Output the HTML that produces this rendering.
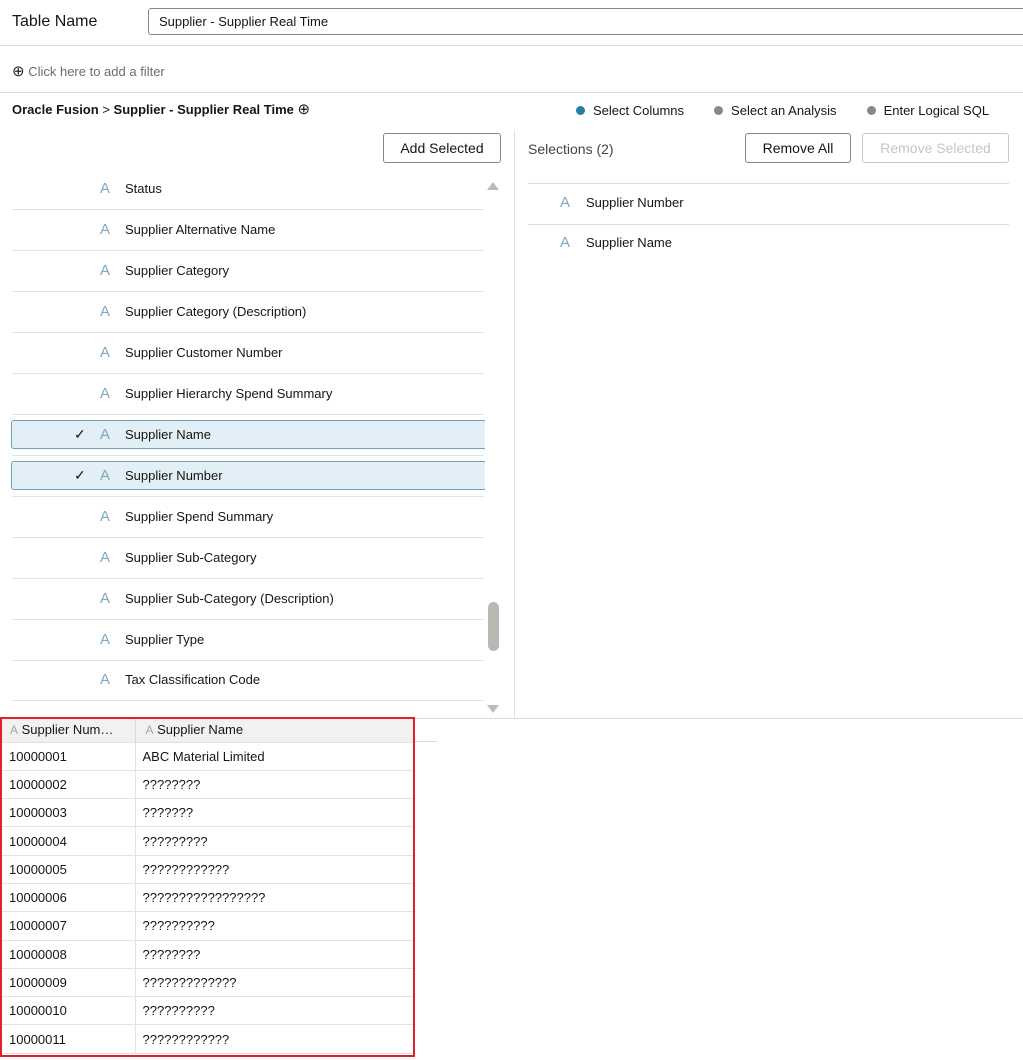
<!DOCTYPE html>
<html><head><meta charset="utf-8"><style>
*{box-sizing:border-box;margin:0;padding:0}
body{width:1023px;height:1060px;background:#fff;font-family:"Liberation Sans",sans-serif;color:#161513;position:relative;overflow:hidden;font-size:13px}
.a{position:absolute}
.btn{position:absolute;border:1px solid #8a8886;border-radius:3px;background:#fff;font-size:14px;text-align:center;line-height:28px;height:30px}
.row{position:absolute;left:12px;width:472px;height:41px;border-bottom:1px solid #e4e2e0}
.row .ic{position:absolute;left:88px;top:11px;color:#7fa7bd;font-size:15px}
.row .t{position:absolute;left:113px;top:12px}
.sel{position:absolute;left:11px;width:474px;height:29px;background:#e2eff6;border:1px solid #6fa3b8;border-right:none;border-radius:3px 0 0 3px}
.sel .ck{position:absolute;left:62px;top:5px;font-size:14px}
.sel .ic{position:absolute;left:88px;top:5px;color:#7fa7bd;font-size:15px}
.sel .t{position:absolute;left:113px;top:6px}
.dot{display:inline-block;width:9px;height:9px;border-radius:50%;margin-right:8px;vertical-align:0}
table{border-collapse:collapse;font-size:13px;line-height:15px}
td{height:28.3px;border-bottom:1px solid #e4e2e0;padding:0 0 0 7px}
</style></head><body>
<div class="a" style="left:12px;top:13px;font-size:16px">Table Name</div>
<div class="a" style="left:148px;top:8px;width:890px;height:27px;border:1px solid #8a8886;border-radius:3px;padding:5px 10px;font-size:13px">Supplier - Supplier Real Time</div>
<div class="a" style="left:0;top:45px;width:1023px;border-top:1px solid #dcdad8"></div>
<div class="a" style="left:12px;top:62px;font-size:13px;color:#6f6d6b"><span style="color:#222;font-size:15px">⊕</span> Click here to add a filter</div>
<div class="a" style="left:0;top:92px;width:1023px;border-top:1px solid #dcdad8"></div>
<div class="a" style="left:12px;top:100px;font-weight:bold;font-size:13px">Oracle Fusion <span style="font-weight:normal">&gt;</span> Supplier - Supplier Real Time <span style="font-weight:normal;font-size:15px">⊕</span></div>
<div class="a" style="left:576px;top:103px;font-size:13px"><span class="dot" style="background:#227fa7"></span>Select Columns<span style="display:inline-block;width:30px"></span><span class="dot" style="background:#8a8886"></span>Select an Analysis<span style="display:inline-block;width:30px"></span><span class="dot" style="background:#8a8886"></span>Enter Logical SQL</div>
<div class="btn" style="left:383px;top:133px;width:118px">Add Selected</div>
<div class="a" style="left:514px;top:130px;height:588px;border-left:1px solid #e4e2e0"></div>
<div class="a" style="left:528px;top:141px;font-size:14px;color:#444">Selections (2)</div>
<div class="btn" style="left:745px;top:133px;width:106px">Remove All</div>
<div class="btn" style="left:862px;top:133px;width:147px;color:#c8c6c4;border-color:#c8c6c4">Remove Selected</div>
<div class="a" style="left:528px;top:183px;width:481px;border-top:1px solid #dcdad8"></div>
<div class="a" style="left:560px;top:194px;color:#7fa7bd;font-size:15px">A</div><div class="a" style="left:586px;top:195px">Supplier Number</div>
<div class="a" style="left:528px;top:224px;width:481px;border-top:1px solid #dcdad8"></div>
<div class="a" style="left:560px;top:234px;color:#7fa7bd;font-size:15px">A</div><div class="a" style="left:586px;top:235px">Supplier Name</div>

<div class="row" style="top:169px"><span class="ic">A</span><span class="t">Status</span></div>
<div class="row" style="top:210px"><span class="ic">A</span><span class="t">Supplier Alternative Name</span></div>
<div class="row" style="top:251px"><span class="ic">A</span><span class="t">Supplier Category</span></div>
<div class="row" style="top:292px"><span class="ic">A</span><span class="t">Supplier Category (Description)</span></div>
<div class="row" style="top:333px"><span class="ic">A</span><span class="t">Supplier Customer Number</span></div>
<div class="row" style="top:374px"><span class="ic">A</span><span class="t">Supplier Hierarchy Spend Summary</span></div>
<div class="row" style="top:415px"></div>
<div class="sel" style="top:420px"><span class="ck">✓</span><span class="ic">A</span><span class="t">Supplier Name</span></div>
<div class="row" style="top:456px"></div>
<div class="sel" style="top:461px"><span class="ck">✓</span><span class="ic">A</span><span class="t">Supplier Number</span></div>
<div class="row" style="top:497px"><span class="ic">A</span><span class="t">Supplier Spend Summary</span></div>
<div class="row" style="top:538px"><span class="ic">A</span><span class="t">Supplier Sub-Category</span></div>
<div class="row" style="top:579px"><span class="ic">A</span><span class="t">Supplier Sub-Category (Description)</span></div>
<div class="row" style="top:620px"><span class="ic">A</span><span class="t">Supplier Type</span></div>
<div class="row" style="top:660px"><span class="ic">A</span><span class="t">Tax Classification Code</span></div>
<div class="a" style="left:487px;top:182px;width:0;height:0;border-left:6px solid transparent;border-right:6px solid transparent;border-bottom:8px solid #bdbab7"></div>
<div class="a" style="left:488px;top:602px;width:11px;height:49px;border-radius:6px;background:#bbb7b3"></div>
<div class="a" style="left:487px;top:705px;width:0;height:0;border-left:6px solid transparent;border-right:6px solid transparent;border-top:8px solid #bdbab7"></div>
<div class="a" style="left:0;top:718px;width:1023px;border-top:1px solid #dcdad8"></div>
<div class="a" style="left:0;top:741px;width:437px;border-top:1px solid #dcdad8"></div>

<div class="a" style="left:0;top:717px;width:415px;height:340px;border:2px solid #e0202a;background:#fff;overflow:hidden">
<table style="width:411px">
<tr style="background:#f2f1f0"><td style="width:133px;height:23px;border-right:1px solid #dcdad8;padding-left:8px"><span style="color:#9aa8b4;font-size:12px">A</span> Supplier Num…</td><td style="height:23px;padding-left:10px"><span style="color:#9aa8b4;font-size:12px">A</span> Supplier Name</td></tr>
<tr><td style="border-right:1px solid #e4e2e0">10000001</td><td>ABC Material Limited</td></tr>
<tr><td style="border-right:1px solid #e4e2e0">10000002</td><td>????????</td></tr>
<tr><td style="border-right:1px solid #e4e2e0">10000003</td><td>???????</td></tr>
<tr><td style="border-right:1px solid #e4e2e0">10000004</td><td>?????????</td></tr>
<tr><td style="border-right:1px solid #e4e2e0">10000005</td><td>????????????</td></tr>
<tr><td style="border-right:1px solid #e4e2e0">10000006</td><td>?????????????????</td></tr>
<tr><td style="border-right:1px solid #e4e2e0">10000007</td><td>??????????</td></tr>
<tr><td style="border-right:1px solid #e4e2e0">10000008</td><td>????????</td></tr>
<tr><td style="border-right:1px solid #e4e2e0">10000009</td><td>?????????????</td></tr>
<tr><td style="border-right:1px solid #e4e2e0">10000010</td><td>??????????</td></tr>
<tr><td style="border-right:1px solid #e4e2e0">10000011</td><td>????????????</td></tr>
</table></div>
</body></html>
